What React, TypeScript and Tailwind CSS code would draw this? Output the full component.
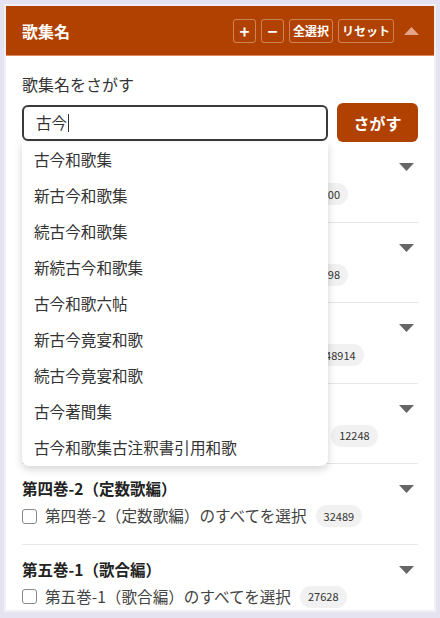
const sections = [
  { title: "第一巻（勅撰集編）", count: "33700" },
  { title: "第二巻（私撰集編）", count: "22798" },
  { title: "第三巻（私家集編Ⅰ）", count: "48914" },
  { title: "第四巻-1（私家集編Ⅱ）", count: "12248" },
  { title: "第四巻-2（定数歌編）", count: "32489" },
  { title: "第五巻-1（歌合編）", count: "27628" },
];

const suggestions = [
  "古今和歌集",
  "新古今和歌集",
  "続古今和歌集",
  "新続古今和歌集",
  "古今和歌六帖",
  "新古今竟宴和歌",
  "続古今竟宴和歌",
  "古今著聞集",
  "古今和歌集古注釈書引用和歌",
];

function Triangle({ up, className }: { up?: boolean; className: string }) {
  return (
    <svg width="15" height="8" viewBox="0 0 15 8" className={className}>
      <polygon points={up ? "0,8 15,8 7.5,0" : "0,0 15,0 7.5,8"} fill="currentColor" />
    </svg>
  );
}

function HeaderButton({ label, wide }: { label: string; wide?: boolean }) {
  return (
    <button
      className={
        "flex h-[24px] items-center justify-center rounded-[3px] border border-white/35 font-bold text-white " +
        (wide ? "px-[3px] text-[12px]" : "w-[23px] text-[17px]")
      }
    >
      {label}
    </button>
  );
}

export default function App() {
  return (
    <div
      className="h-[618px] overflow-hidden bg-[#e5e2f1] p-1"
      style={{ fontFamily: '"Noto Sans CJK JP", "Noto Sans", sans-serif' }}
    >
      <div className="h-[608px] overflow-hidden border-2 border-[#f1f1f4] bg-white">
        <div className="flex h-[50px] items-center border-b border-[#d98a66] bg-[#b14100] pl-4 pr-[15px]">
          <div className="flex-1 text-[16px] font-bold text-white">歌集名</div>
          <div className="flex items-center gap-[5px]">
            <HeaderButton label="+" />
            <HeaderButton label="−" />
            <HeaderButton label="全選択" wide />
            <HeaderButton label="リセット" wide />
            <Triangle up className="ml-[5px] text-[#e3a68a]" />
          </div>
        </div>

        <div className="px-4 pt-[17px]">
          <div className="text-[16px] leading-[22px] text-[#333]">歌集名をさがす</div>
          <div className="mt-[8px] flex items-center gap-[9px]">
            <div className="relative flex-1">
              <div className="flex h-[36px] items-center rounded-[6px] border-2 border-[#3a3a3a] px-[12px] text-[15.5px] text-[#333]">
                古今
                <span className="ml-[1px] inline-block h-[18px] w-[1px] bg-[#333]" />
              </div>
              <div className="absolute left-0 right-0 top-[37px] z-10 rounded-b-[7px] bg-white shadow-[0_3px_8px_rgba(0,0,0,0.18)]">
                {suggestions.map((s) => (
                  <div key={s} className="flex h-[36px] items-center px-[12px] text-[15.6px] text-[#333]">
                    {s}
                  </div>
                ))}
              </div>
            </div>
            <button className="h-[39px] w-[81px] rounded-[6px] bg-[#b14100] text-[16px] font-bold text-white">
              さがす
            </button>
          </div>

          <div>
            {sections.map((sec, i) => (
              <div
                key={sec.title}
                className={"pb-[15.5px] pt-[14px] " + (i > 0 ? "border-t border-[#e6e6e6]" : "")}
              >
                <div className="flex h-[22px] items-center justify-between pr-[4px]">
                  <div className="text-[15.5px] font-bold text-[#222]">{sec.title}</div>
                  <Triangle className="text-[#666]" />
                </div>
                <div className="mt-[4px] flex h-[24px] items-center">
                  <span className="h-[15px] w-[15px] rounded-[3px] border border-[#8a8a8a] bg-white" />
                  <span className="ml-[8px] text-[15.6px] text-[#444]">{sec.title}のすべてを選択</span>
                  <span className="ml-[9px] flex h-[22px] items-center rounded-full bg-[#f1f1f1] px-[8px] text-[11px] text-[#333]">
                    {sec.count}
                  </span>
                </div>
              </div>
            ))}
          </div>
        </div>
      </div>
    </div>
  );
}
